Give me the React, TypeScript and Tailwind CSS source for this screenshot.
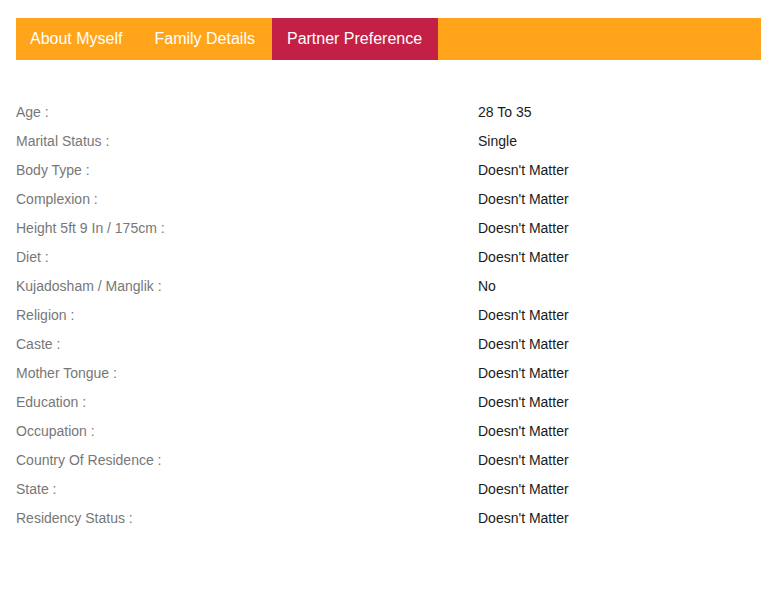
import React from "react";

const tabs = [
  { label: "About Myself", cls: "pl-[14px] pr-[17px]" },
  { label: "Family Details", cls: "pl-[15px] pr-[17px]" },
  { label: "Partner Preference", cls: "pl-[15px] pr-[16px] bg-[#c42046]" },
];

const rows: [string, string][] = [
  ["Age :", "28 To 35"],
  ["Marital Status :", "Single"],
  ["Body Type :", "Doesn't Matter"],
  ["Complexion :", "Doesn't Matter"],
  ["Height 5ft 9 In / 175cm :", "Doesn't Matter"],
  ["Diet :", "Doesn't Matter"],
  ["Kujadosham / Manglik :", "No"],
  ["Religion :", "Doesn't Matter"],
  ["Caste :", "Doesn't Matter"],
  ["Mother Tongue :", "Doesn't Matter"],
  ["Education :", "Doesn't Matter"],
  ["Occupation :", "Doesn't Matter"],
  ["Country Of Residence :", "Doesn't Matter"],
  ["State :", "Doesn't Matter"],
  ["Residency Status :", "Doesn't Matter"],
];

const App = () => {
  return (
    <div className="min-h-[613px] bg-white px-4 pt-[18px] font-['Liberation_Sans',Arial,sans-serif]">
      <div className="flex h-[42px] w-[745px] bg-[#ffa41b]">
        {tabs.map((t) => (
          <div key={t.label} className={"flex items-center text-base text-white " + t.cls}>
            {t.label}
          </div>
        ))}
      </div>

      <div className="mt-[37px] w-[745px]">
        {rows.map(([label, value]) => (
          <div key={label} className="flex h-[29px] items-center text-sm">
            <div className="w-[462px] text-[#777777]">{label}</div>
            <div className="text-[#1a1a1a]">{value}</div>
          </div>
        ))}
      </div>
    </div>
  );
};

export default App;
